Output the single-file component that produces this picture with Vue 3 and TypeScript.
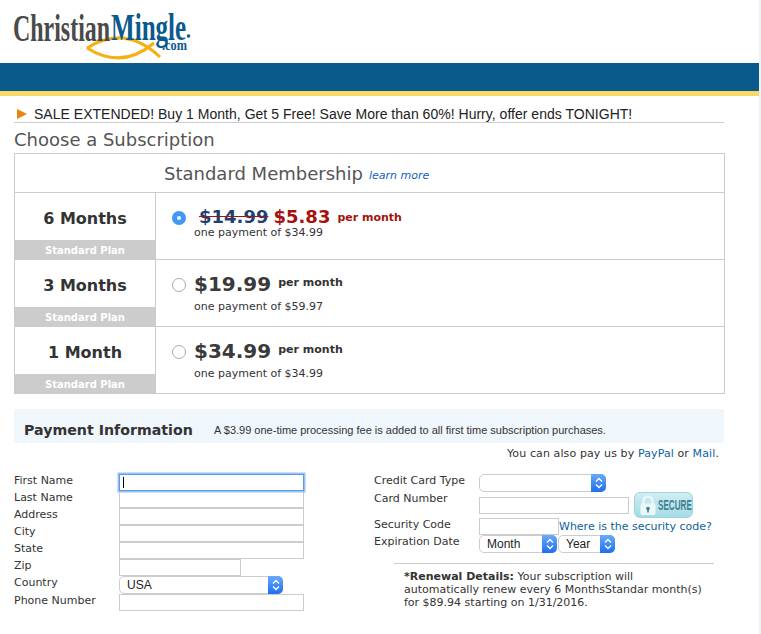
<template>
  <div class="page">
    <header class="logo-bar">
      <svg class="logo" width="200" height="63" viewBox="0 0 200 63" aria-label="ChristianMingle.com">
        <path d="M87 48 Q125 24 160 57" class="fish" />
        <path d="M87 48 Q122 70 154 43" class="fish" />
        <text transform="translate(13 40.500) scale(0.63 1)" class="logo-text" fill="#4a4a4a">Christian</text>
        <text transform="translate(111 40) scale(0.66 1)" class="logo-text" fill="#0b5a8e">Mingle</text>
        <circle cx="188.500" cy="36" r="1.800" fill="#0b5a8e" />
        <text transform="translate(162 50) scale(0.88 1)" class="logo-com" fill="#0b5a8e">.com</text>
      </svg>
    </header>
    <div class="blue-band" />
    <div class="content">
      <div class="sale">
        <span class="sale-arrow" />
        <span>SALE EXTENDED! Buy 1 Month, Get 5 Free! Save More than 60%! Hurry, offer ends TONIGHT!</span>
      </div>
      <h1 class="title">Choose a Subscription</h1>

      <section class="plans">
        <div class="plans-head">
          <span class="plans-name">Standard Membership</span>
          <a class="learn">learn more</a>
        </div>
        <div v-for="(p, i) in plans" :key="p.term" class="plan">
          <div class="plan-left">
            <div class="term">{{ p.term }}</div>
            <div class="plan-tag">Standard Plan</div>
          </div>
          <div class="plan-right">
            <span class="radio" :class="{ on: i === 0 }" />
            <div class="price-box" :class="{ tight: i === 0 }">
              <div class="price-line">
                <template v-if="p.old">
                  <span class="price old">{{ p.old }}</span>
                  <span class="price sale-price">{{ p.price }}</span>
                  <span class="per red">per month</span>
                </template>
                <template v-else>
                  <span class="price">{{ p.price }}</span>
                  <span class="per">per month</span>
                </template>
              </div>
              <div class="once">one payment of {{ p.total }}</div>
            </div>
          </div>
        </div>
      </section>

      <div class="pay-head">
        <h2>Payment Information</h2>
        <span>A $3.99 one-time processing fee is added to all first time subscription purchases.</span>
      </div>
      <div class="also">You can also pay us by <a>PayPal</a> or <a>Mail</a>.</div>

      <div class="form">
        <div class="col-left">
          <label>First Name</label><input class="field focus" />
          <label>Last Name</label><input class="field" />
          <label>Address</label><input class="field" />
          <label>City</label><input class="field" />
          <label>State</label><input class="field" />
          <label>Zip</label><input class="field zip" />
          <label>Country</label>
          <div class="select country">USA<span class="sel-btn"><svg width="8" height="12" viewBox="0 0 8 12"><path d="M1 4.500 L4 1.500 L7 4.500 M1 7.500 L4 10.500 L7 7.500" /></svg></span></div>
          <label>Phone Number</label><input class="field" />
        </div>

        <div class="col-right">
          <div class="cc-grid">
            <label>Credit Card Type</label>
            <div class="select cc"><span class="sel-btn"><svg width="8" height="12" viewBox="0 0 8 12"><path d="M1 4.500 L4 1.500 L7 4.500 M1 7.500 L4 10.500 L7 7.500" /></svg></span></div>
            <label>Card Number</label>
            <div class="card-row">
              <input class="field card" />
              <div class="secure">
                <svg width="16" height="22" viewBox="0 0 16 22">
                  <path d="M3.500 10 V7 a4.500 4.500 0 0 1 9 0 V10" fill="none" stroke="#eaf7f9" stroke-width="2.500" />
                  <rect x="0.500" y="9.500" width="15" height="11.500" rx="2" fill="#eef9fa" />
                  <circle cx="8" cy="14.500" r="1.800" fill="#3f7f92" />
                  <rect x="7.200" y="15" width="1.600" height="3.500" fill="#3f7f92" />
                </svg>
                <span>SECURE</span>
              </div>
            </div>
            <label>Security Code</label>
            <div class="code-row"><input class="field code" /><a>Where is the security code?</a></div>
            <label>Expiration Date</label>
            <div class="exp-row">
              <div class="select month">Month<span class="sel-btn"><svg width="8" height="12" viewBox="0 0 8 12"><path d="M1 4.500 L4 1.500 L7 4.500 M1 7.500 L4 10.500 L7 7.500" /></svg></span></div>
              <div class="select year">Year<span class="sel-btn"><svg width="8" height="12" viewBox="0 0 8 12"><path d="M1 4.500 L4 1.500 L7 4.500 M1 7.500 L4 10.500 L7 7.500" /></svg></span></div>
            </div>
          </div>
          <div class="renewal">
            <strong>*Renewal Details:</strong> Your subscription will<br />
            automatically renew every 6 MonthsStandar month(s)<br />
            for $89.94 starting on 1/31/2016.
          </div>
        </div>
      </div>
    </div>
  </div>
</template>

<script setup lang="ts">
interface Plan { term: string; old?: string; price: string; total: string }

const plans: Plan[] = [
  { term: '6 Months', old: '$14.99', price: '$5.83', total: '$34.99' },
  { term: '3 Months', price: '$19.99', total: '$59.97' },
  { term: '1 Month', price: '$34.99', total: '$34.99' },
]
</script>

<style>
html, body { background: #fff; }
</style>

<style scoped>
.page {
  width: 761px;
  height: 634px;
  box-sizing: border-box;
  border-right: 2px solid #edf2f2;
  overflow: hidden;
  font-family: "DejaVu Sans", Verdana, sans-serif;
  font-size: 11px;
  color: #333;
}
.logo-bar { height: 63px; }
.logo { display: block; }
.logo-text {
  font-family: "Liberation Serif", serif;
  font-size: 38px;
  font-weight: 700;
}
.logo-com {
  font-family: "Liberation Serif", serif;
  font-size: 14px;
  font-weight: 700;
}
.fish { fill: none; stroke: #f6b012; stroke-width: 3; }
.blue-band {
  height: 28px;
  background: #0a5a8c;
  border-bottom: 5px solid #fbd968;
}
.content { padding: 9px 35px 0 14px; }
.sale {
  display: flex;
  align-items: center;
  gap: 7px;
  height: 17px;
  padding-left: 3px;
  border-bottom: 1px solid #ccc;
  font-family: "Liberation Sans", Arial, sans-serif;
  font-size: 14px;
  letter-spacing: 0.02px;
  color: #222;
}
.sale-arrow {
  width: 0;
  height: 0;
  border-left: 10px solid #e8840f;
  border-top: 5px solid transparent;
  border-bottom: 5px solid transparent;
}
.title {
  margin: 5px 0 0;
  height: 25px;
  font-size: 18px;
  line-height: 24px;
  font-weight: 400;
  color: #555;
}
.plans { border: 1px solid #ccc; margin-right: -1px; }
.plans-head {
  height: 39px;
  display: flex;
  align-items: center;
  padding: 1px 0 0 149px;
  box-sizing: border-box;
  border-bottom: 1px solid #ccc;
}
.plans-name { font-size: 18px; color: #555; }
.learn {
  margin: 3px 0 0 6px;
  font-size: 11px;
  font-style: italic;
  color: #0f5fc4;
}
.plan { display: flex; height: 66px; border-bottom: 1px solid #ccc; }
.plan:last-child { border-bottom: 0; }
.plan-left {
  width: 140px;
  display: flex;
  flex-direction: column;
  border-right: 1px solid #ccc;
}
.term {
  flex: 1;
  display: flex;
  align-items: center;
  justify-content: center;
  padding-top: 4px;
  font-size: 16px;
  font-weight: 700;
  color: #333;
}
.plan-tag {
  height: 19px;
  line-height: 21px;
  background: #ccc;
  color: #fff;
  font-size: 10px;
  font-weight: 700;
  text-align: center;
}
.plan-right {
  flex: 1;
  display: flex;
  align-items: flex-start;
  padding: 18px 0 0 16px;
}
.radio {
  width: 14px;
  height: 14px;
  box-sizing: border-box;
  border: 1.500px solid #aaa;
  border-radius: 50%;
  background: #fff;
}
.radio.on { border: 5px solid #3f97f7; }
.price-box { margin: -7px 0 0 8px; }
.price-box.tight { margin-top: -4px; }
.price-line { display: flex; align-items: center; gap: 5px; height: 26px; }
.price-box.tight .price-line { height: 20px; padding-left: 5px; }
.price { font-size: 20px; font-weight: 700; color: #3a3a3a; line-height: 26px; }
.price-box.tight .price { font-size: 18px; line-height: 20px; }
.price.old { color: #1f3f73; text-decoration: line-through; text-decoration-color: #a5120c; }
.price.sale-price { color: #a5120c; }
.per { margin: 0 0 4px 2px; font-size: 11px; font-weight: 700; color: #333; }
.price-box.tight .per { margin-bottom: 0; }
.per.red { color: #a5120c; }
.once { margin-top: 3px; font-size: 11px; line-height: 13px; color: #333; }
.price-box.tight .once { margin-top: 0; line-height: 12px; }
.pay-head {
  margin-top: 15px;
  height: 34px;
  box-sizing: border-box;
  display: flex;
  align-items: center;
  padding: 8px 0 0 10px;
  background: #eff6fc;
}
.pay-head h2 {
  margin: 0;
  width: 190px;
  font-size: 14.200px;
  font-weight: 700;
  color: #333;
}
.pay-head span {
  font-family: "Liberation Sans", Arial, sans-serif;
  font-size: 11px;
  color: #333;
}
.also {
  height: 31px;
  line-height: 21px;
  padding-right: 5px;
  text-align: right;
  letter-spacing: 0.11px;
}
.also a, .code-row a { color: #0f5f9c; }
.form { display: flex; }
.col-left {
  width: 360px;
  display: grid;
  grid-template-columns: 105px 185px;
  grid-template-rows: repeat(6, 17px) 18px 17px;
  align-content: start;
  justify-items: start;
}
label { line-height: 13px; }
.field {
  display: block;
  box-sizing: border-box;
  width: 185px;
  height: 17px;
  margin: 0;
  padding: 0;
  border: 1px solid #ccc;
  background: #fff;
  outline: 0;
}
.field.focus {
  position: relative;
  z-index: 1;
  border-color: #5a9ce8;
  box-shadow: 0 0 0 1.500px #97c2f3;
  background: linear-gradient(#000, #000) 3px 2px / 1px 11px no-repeat #fff;
}
.field.zip { width: 122px; }
.select {
  position: relative;
  box-sizing: border-box;
  height: 18px;
  line-height: 17px;
  padding-left: 7px;
  border: 1px solid #ccc;
  border-radius: 5px;
  background: #fff;
  color: #222;
  font-family: "Liberation Sans", Arial, sans-serif;
  font-size: 12px;
}
.sel-btn {
  position: absolute;
  top: -1px;
  right: -1px;
  bottom: -1px;
  width: 15px;
  display: flex;
  align-items: center;
  justify-content: center;
  border-radius: 0 5px 5px 0;
  background: linear-gradient(#6aaafa, #1f6fee);
}
.sel-btn path { fill: none; stroke: #fff; stroke-width: 1.300; }
.country { width: 164px; }
.cc-grid {
  display: grid;
  grid-template-columns: 105px auto;
  grid-template-rows: 18px 26px 17px 18px;
  justify-items: start;
}
.cc { width: 127px; }
.card-row { display: flex; align-items: center; gap: 5px; }
.field.card { width: 150px; }
.secure {
  width: 59px;
  height: 26px;
  box-sizing: border-box;
  display: flex;
  align-items: center;
  gap: 2px;
  padding-left: 5px;
  border: 1px solid #9fd3de;
  border-radius: 6px;
  background: linear-gradient(#cfeef3, #a5dbe6);
}
.secure svg { flex: none; }
.secure span {
  flex: none;
  width: 34px;
  font-family: "Liberation Sans", Arial, sans-serif;
  font-size: 14px;
  font-weight: 700;
  color: #3f7f92;
  transform: scaleX(0.58);
  transform-origin: left center;
}
.code-row { display: flex; align-items: center; }
.field.code { width: 80px; }
.exp-row { display: flex; gap: 1px; }
.month { width: 78px; }
.year { width: 57px; }
.renewal {
  width: 320px;
  box-sizing: border-box;
  margin: 10px 0 0 20px;
  padding: 6px 0 0 10px;
  border-top: 1px solid #ccc;
  line-height: 13px;
}
</style>
